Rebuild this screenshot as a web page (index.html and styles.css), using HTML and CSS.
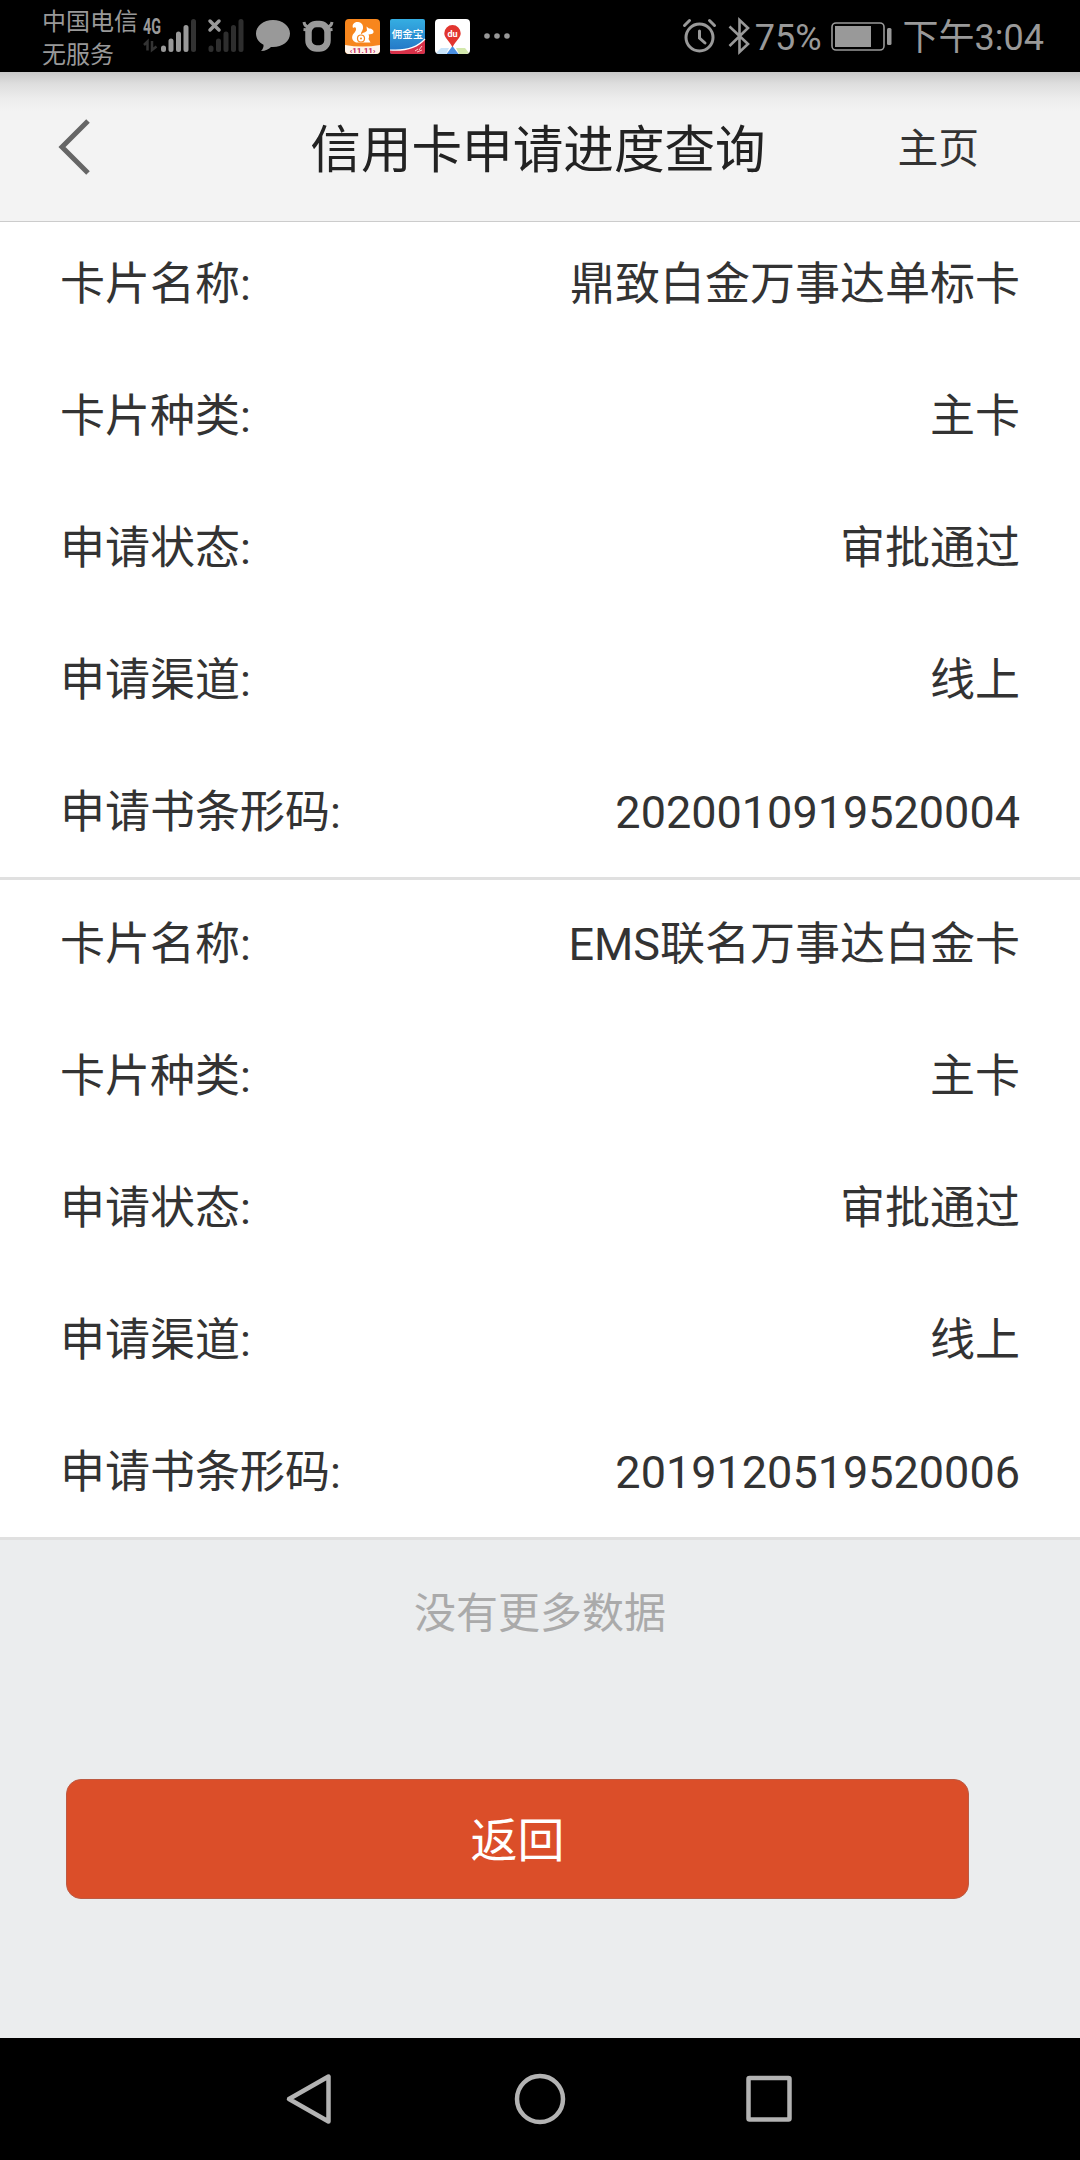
FILE: index.html
```html
<!DOCTYPE html>
<html lang="zh-CN">
<head>
    <meta charset="UTF-8">
    <meta name="viewport" content="width=device-width, initial-scale=1.0">
    <title>信用卡申请进度查询</title>
    <link rel="stylesheet" href="styles.css">
</head>
<body>

    <!-- STATUS BAR -->
    <div class="status-bar">
        <div class="carrier">
            <p>中国电信</p>
            <p>无服务</p>
        </div>
        <svg class="signal" width="54" height="36" viewBox="0 0 54 36">
            <text class="net" x="0" y="16" textLength="18" lengthAdjust="spacingAndGlyphs">4G</text>
            <path d="M1 27l3.500-3.500v9M9 23v9l4.500-3.500" fill="none" stroke="#333" stroke-width="2.500"/>
            <g stroke="#999" stroke-width="5" stroke-linecap="round">
                <path d="M20.500 30v1.500M28 23v8.500M35.500 16v15.500M43 9.500v22"/>
                <path d="M50.500 3.500v28" stroke="#333"/>
            </g>
        </svg>
        <svg class="no-signal" width="37" height="36" viewBox="0 0 37 36">
            <path d="M2 3l9 9M11 3l-9 9" stroke="#999" stroke-width="3.500" stroke-linecap="round"/>
            <path d="M3 30v1.500M10.500 23v8.500M18 16v15.500M25.500 9.500v22M33 3.500v28" stroke="#2e2e2e" stroke-width="5" stroke-linecap="round"/>
        </svg>
        <svg class="bubble" width="34" height="34" viewBox="0 0 34 34">
            <path d="M17 1C7.500 1 0 7 0 14.500c0 5 3 9 7.500 11.200.3 2.300-.7 4.500-2.500 6.300 4.500-.3 8-2 10-4.100 10.500.8 19-5 19-13.400C34 7 26.500 1 17 1z" fill="#999"/>
        </svg>
        <svg class="bull" width="32" height="34" viewBox="0 0 32 34">
            <path d="M2 3c.5 3.500 3 5.500 7 5M30 3c-.5 3.500-3 5.500-7 5M1.500 10.500l5 .5M30.500 10.500l-5 .5" fill="none" stroke="#999" stroke-width="3"/>
            <rect x="6.500" y="5" width="19" height="24.500" rx="8" fill="none" stroke="#999" stroke-width="6.500"/>
        </svg>
        <svg class="app" width="35" height="35" viewBox="0 0 35 35">
            <rect width="35" height="35" rx="4" fill="#f7861d"/>
            <path d="M0 26q17.500 3 35 0V31a4 4 0 0 1-4 4H4a4 4 0 0 1-4-4z" fill="#fff5ec"/>
            <path d="M8 9C6.500 5 10 2.500 13 3c4 .5 5.500 3.500 5 6.500-.4 2.500-2.500 4-2 6 2-2.500 4.500-1.500 6-4l-.5-4 2.500 2c3 0 5 2 4.500 4-.5 1.500-3 1.500-5 2 1 1.500.5 3 0 4.500l2 3.500H11c-3.500-1.500-4.500-4.500-3.500-7 1-2.500 4-4 3.500-7-.3-1.300-1.500-1.500-3-.5z" fill="#fff"/>
            <circle cx="16" cy="19.500" r="3.500" fill="none" stroke="#f7861d" stroke-width="1.200"/>
            <circle cx="16" cy="19.500" r="1" fill="#f7861d"/>
            <text class="uc" x="17.500" y="34" text-anchor="middle">‹11.11›</text>
        </svg>
        <svg class="app" width="35" height="35" viewBox="0 0 35 35">
            <defs>
                <linearGradient id="sky" x1="0" y1="0" x2="0" y2="1">
                    <stop offset="0" stop-color="#35aee2"/>
                    <stop offset="1" stop-color="#2272c4"/>
                </linearGradient>
            </defs>
            <rect width="35" height="35" rx="2" fill="url(#sky)"/>
            <path d="M0 31C14 32 27 29 35 20v13a2 2 0 0 1-2 2H2a2 2 0 0 1-2-2z" fill="#d83149"/>
            <path d="M0 31C14 32 27 29 35 20" fill="none" stroke="#fff" stroke-width="1.200"/>
            <path d="M25 32l3-2M29 31l3-4M27 33l5-2" stroke="#ffc9c9" stroke-width="1"/>
            <text class="yjb" x="17.500" y="19" text-anchor="middle">佣金宝</text>
        </svg>
        <svg class="app" width="35" height="35" viewBox="0 0 35 35">
            <rect width="35" height="35" rx="4" fill="#fff"/>
            <path d="M1 34l5-5h8l-3 6H4z" fill="#c8e4fa"/>
            <path d="M21 29h9l4 5-3 1h-7z" fill="#d3e8ac"/>
            <path d="M17.500 27l6 8h-12z" fill="#4a90e2"/>
            <path d="M17.500 6a8.200 8.200 0 0 0-8.200 8.200c0 5 5 7.300 8.200 14 3.200-6.700 8.200-9 8.200-14A8.200 8.200 0 0 0 17.500 6z" fill="#e2352f"/>
            <text class="du" x="17.500" y="17.500" text-anchor="middle">du</text>
        </svg>
        <svg class="more" width="26" height="8" viewBox="0 0 26 8">
            <g fill="#999">
                <circle cx="3" cy="4" r="2.800"/>
                <circle cx="13" cy="4" r="2.800"/>
                <circle cx="23" cy="4" r="2.800"/>
            </g>
        </svg>

        <div class="status-right">
            <svg class="alarm" width="33" height="34" viewBox="0 0 33 34">
                <g fill="none" stroke="#999" stroke-width="3" stroke-linecap="round">
                    <circle cx="16.500" cy="18.500" r="13.500"/>
                    <path d="M1.500 6.500l5-5M31.500 6.500l-5-5M16.500 12v7l5.500 5"/>
                </g>
            </svg>
            <svg class="bt" width="22" height="36" viewBox="0 0 22 36">
                <path d="M1.500 8.500L20 26l-8.500 8V2L20 10 1.500 28" fill="none" stroke="#999" stroke-width="2.600"/>
            </svg>
            <span class="percent">75%</span>
            <svg class="battery" width="61" height="29" viewBox="0 0 61 29">
                <rect x="1" y="1" width="52" height="27" rx="4" fill="none" stroke="#999" stroke-width="1.600"/>
                <rect x="4" y="4" width="36" height="21" fill="#999"/>
                <rect x="56" y="6" width="4.500" height="17" rx="1.500" fill="#999"/>
            </svg>
            <span class="time">下午3:04</span>
        </div>
    </div>

    <!-- HEADER -->
    <div class="header">
        <svg class="back" width="33" height="56" viewBox="0 0 33 56">
            <path d="M30 2L4 28l26 26" fill="none" stroke="#666" stroke-width="5"/>
        </svg>
        <h1>信用卡申请进度查询</h1>
        <a class="home">主页</a>
    </div>

    <!-- APPLICATION LIST -->
    <div class="list">
        <div class="card">
            <div class="row"><span>卡片名称:</span><span>鼎致白金万事达单标卡</span></div>
            <div class="row"><span>卡片种类:</span><span>主卡</span></div>
            <div class="row"><span>申请状态:</span><span>审批通过</span></div>
            <div class="row"><span>申请渠道:</span><span>线上</span></div>
            <div class="row"><span>申请书条形码:</span><span>2020010919520004</span></div>
        </div>
        <div class="card">
            <div class="row"><span>卡片名称:</span><span>EMS联名万事达白金卡</span></div>
            <div class="row"><span>卡片种类:</span><span>主卡</span></div>
            <div class="row"><span>申请状态:</span><span>审批通过</span></div>
            <div class="row"><span>申请渠道:</span><span>线上</span></div>
            <div class="row"><span>申请书条形码:</span><span>2019120519520006</span></div>
        </div>
    </div>

    <div class="footer">
        <p class="no-more">没有更多数据</p>
        <button class="return-btn">返回</button>
    </div>

    <!-- NAVIGATION BAR -->
    <div class="nav-bar">
        <svg width="50" height="50" viewBox="0 0 50 50"><path d="M42.500 2.500v45L3 25z"/></svg>
        <svg width="50" height="50" viewBox="0 0 50 50"><circle cx="25" cy="25" r="23"/></svg>
        <svg width="50" height="50" viewBox="0 0 50 50"><rect x="4.500" y="4" width="41" height="41.500" rx="1"/></svg>
    </div>

</body>
</html>
```

FILE: styles.css
```css
* { margin: 0; padding: 0; box-sizing: border-box; }
body {
    width: 1080px;
    height: 2160px;
    display: flex;
    flex-direction: column;
    background: #ebedee;
    font-family: Roboto, "Noto Sans CJK SC", sans-serif;
    color: #333;
    overflow: hidden;
}
svg { display: block; flex-shrink: 0; overflow: visible; }
.status-bar {
    height: 72px;
    flex-shrink: 0;
    display: flex;
    align-items: center;
    background: #000;
    color: #999;
    padding: 0 36px 0 42px;
}
.carrier {
    width: 101px;
    padding-top: 5px;
    font-size: 24px;
    line-height: 33px;
    white-space: nowrap;
}
.net { font-size: 22px; font-weight: bold; fill: #999; }
.no-signal { margin-left: 11px; }
.bubble { margin-left: 11px; }
.bull { margin-left: 12px; margin-right: 11px; }
.app { margin-right: 10px; margin-top: 1px; }
.uc { font-size: 8px; font-weight: bold; fill: #c2185b; }
.yjb { font-size: 10.5px; font-weight: 500; fill: #fff; }
.du { font-size: 9px; font-weight: bold; fill: #fff; }
.more { margin-left: 4px; }
.status-right {
    display: flex;
    align-items: center;
    margin-left: auto;
    font-size: 36px;
    line-height: 68px;
    white-space: nowrap;
}
.percent, .time { padding-top: 4px; }
.bt { margin-left: 12px; }
.percent { margin-left: 5px; }
.battery { margin-left: 9px; }
.time { margin-left: 11px; }
.header {
    position: relative;
    height: 150px;
    flex-shrink: 0;
    display: grid;
    grid-template-columns: 1fr auto 1fr;
    align-items: center;
    padding: 0 62px 0 58px;
    background: linear-gradient(#c8c8c8, #dedede 12px, #ececec 26px, #f3f3f3 40px);
    border-bottom: 1px solid #ccc;
}
.header h1 {
    padding-top: 8px;
    font-size: 50.6px;
    font-weight: normal;
    line-height: 76px;
    color: #222;
}
.home {
    justify-self: end;
    margin-right: 39px;
    padding-top: 4px;
    font-size: 40.8px;
    line-height: 60px;
}
.list {
    margin-top: -2px;
    flex-shrink: 0;
}
.card {
    height: 660px;
    background: #fff;
    border-bottom: 3px solid #e0e0e0;
}
.row {
    display: flex;
    justify-content: space-between;
    height: 132px;
    padding: 0 60px;
    font-size: 45px;
    line-height: 130px;
}
.footer {
    flex: 1;
    padding-top: 43px;
}
.no-more {
    font-size: 42px;
    line-height: 62px;
    color: #aaa;
    text-align: center;
}
.return-btn {
    display: block;
    width: 903px;
    height: 120px;
    margin: 134px 0 0 66px;
    padding-bottom: 5px;
    border: 1px solid #bd5a42;
    border-radius: 15px;
    background: #db4e29;
    color: #fff;
    font-family: inherit;
    font-size: 47px;
}
.nav-bar {
    height: 122px;
    flex-shrink: 0;
    display: flex;
    justify-content: center;
    align-items: center;
    gap: 179px;
    background: #000;
}
.nav-bar svg {
    fill: none;
    stroke: #b3b3b3;
    stroke-width: 4.5;
    stroke-linejoin: round;
}
```
